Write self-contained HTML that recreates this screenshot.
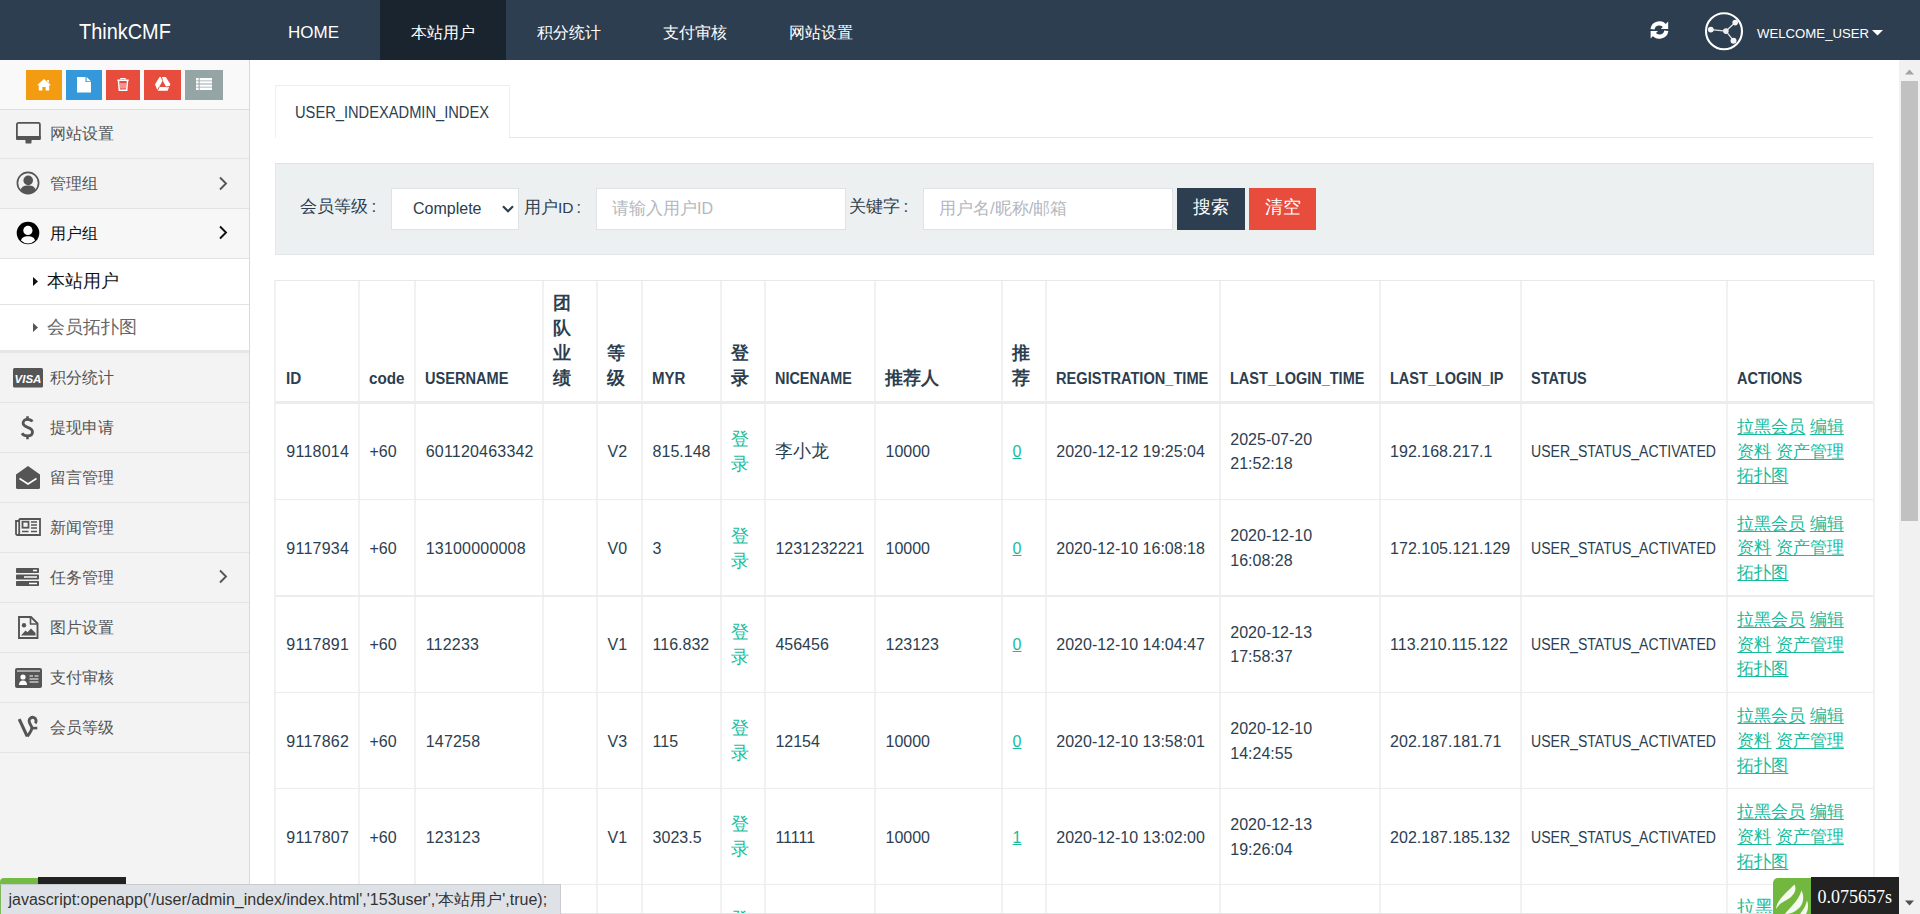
<!DOCTYPE html><html><head><meta charset="utf-8"><style>
*{box-sizing:border-box}
html,body{margin:0;padding:0;width:1920px;height:914px;overflow:hidden;background:#fff;font-family:"Liberation Sans",sans-serif;color:#2c3e50}
svg{display:block}
#nav{position:absolute;left:0;top:0;width:1920px;height:60px;background:#2c3e50}
#nav .t{position:absolute;color:#fff;font-size:16px;line-height:20px;top:22px;white-space:nowrap}
#nav .act{position:absolute;left:380px;top:0;width:126px;height:60px;background:#1a242f}
#side{position:absolute;left:0;top:60px;width:250px;height:854px;background:#f3f3f3;border-right:1px solid #d9d9d9}
.sc{position:absolute;left:0;top:0;width:249px;height:50px;background:#f9f9f9;border-bottom:1px solid #ddd}
.sc .b{position:absolute;top:10px;height:30px}
.sc .b svg{position:absolute}
.mi{position:absolute;left:0;width:249px;border-bottom:1px solid #e3e3e3}
.mi .tx{position:absolute;left:50px;font-size:16.4px;line-height:18px;color:#555;white-space:nowrap}
.mi .ic{position:absolute}
.mi .ar{position:absolute;left:218px}
#main{position:absolute;left:250px;top:60px;width:1650px;height:854px;background:#fff;overflow:hidden}
#sb{position:absolute;left:1899px;top:60px;width:21px;height:854px;background:#f1f1f1}
.abs{position:absolute;white-space:nowrap}
</style></head><body>
<div id="nav">
<div class="t" style="left:79px;top:19.5px;font-size:22px;line-height:24px"><span style="display:inline-block;transform:scaleX(0.905);transform-origin:0 0">ThinkCMF</span></div>
<div class="act"></div>
<div class="t" style="left:288px;top:22.5px;font-size:17px">HOME</div>
<div class="t" style="left:411px;top:23px">本站用户</div>
<div class="t" style="left:537px;top:23px">积分统计</div>
<div class="t" style="left:663px;top:23px">支付审核</div>
<div class="t" style="left:789px;top:23px">网站设置</div>
<div style="position:absolute;left:1644px;top:16px"><svg width="30" height="28" viewBox="0 0 30 28" style=""><path d="M8.5 13.3 A6.9 6.9 0 0 1 21.2 10.6" fill="none" stroke="#fff" stroke-width="4.2"/><path d="M24.2 5.6 L24.2 13 L16.8 13 Z" fill="#fff"/><path d="M22.3 14.7 A6.9 6.9 0 0 1 9.6 17.4" fill="none" stroke="#fff" stroke-width="4.2"/><path d="M6.6 22.4 L6.6 15 L14 15 Z" fill="#fff"/></svg></div>
<div style="position:absolute;left:1704px;top:12px"><svg width="40" height="40" viewBox="0 0 40 40" style=""><circle cx="20" cy="19.3" r="18" fill="none" stroke="#fff" stroke-width="2.1"/><path d="M6.8 17.6 L21.9 19.1 L31.2 10.6 M21.9 19.1 L29.5 28.7" stroke="#dfe3e6" stroke-width="1.3" fill="none"/><circle cx="6.8" cy="17.6" r="2.9" fill="#f4f4f4"/><circle cx="21.9" cy="19.1" r="2.8" fill="#eee"/><circle cx="31.2" cy="10.6" r="2.8" fill="#f4f4f4"/><circle cx="29.5" cy="28.7" r="3" fill="#f4f4f4"/></svg></div>
<div class="t" style="left:1757px;top:25.5px;font-size:13.2px;line-height:16px">WELCOME_USER</div>
<div style="position:absolute;left:1872px;top:30px"><svg width="11" height="6" viewBox="0 0 11 6" style=""><path d="M0 0 L11 0 L5.5 5.5 Z" fill="#fff"/></svg></div>
</div>
<div id="side">
<div class="sc">
<div class="b" style="left:26px;width:36px;background:#f39c12"><div style="position:absolute;left:11px;top:9px"><svg width="14" height="12" viewBox="0 0 14 12" style=""><path d="M7 0 L14 6.3 L12.2 6.3 L12.2 11.5 L8.6 11.5 L8.6 8 L5.4 8 L5.4 11.5 L1.8 11.5 L1.8 6.3 L0 6.3 Z M10 1 L12 1 L12 3.8 L10 2.2Z" fill="#fff"/></svg></div></div>
<div class="b" style="left:66px;width:36px;background:#3498db"><div style="position:absolute;left:11px;top:7px"><svg width="14" height="16" viewBox="0 0 14 16" style=""><path d="M0 0 L8.5 0 L8.5 5 L14 5 L14 15.5 L0 15.5 Z M9.6 0 L14 4.2 L9.6 4.2 Z" fill="#fff"/></svg></div></div>
<div class="b" style="left:106px;width:34px;background:#e74c3c"><div style="position:absolute;left:11px;top:8px"><svg width="12" height="13" viewBox="0 0 12 13" style=""><path d="M4 1.2 L4 0.2 L8 0.2 L8 1.2 M0.3 2.3 L11.7 2.3 M1.5 3 L2.3 12.3 L9.7 12.3 L10.5 3" fill="none" stroke="#fff" stroke-width="1.5"/><path d="M4 5 V10.5 M6 5 V10.5 M8 5 V10.5" stroke="#fde" stroke-width="1"/></svg></div></div>
<div class="b" style="left:144px;width:37px;background:#e74c3c"><div style="position:absolute;left:11px;top:7px"><svg width="16" height="14" viewBox="0 0 16 14" style=""><path d="M4.6 0 L10.8 0 L15.4 7.2 L12.6 13.8 L2.6 13.8 L0 7.2 Z" fill="#fff"/><path d="M7.7 3.6 L11.2 9.9 L4.2 9.9 Z" fill="#e74c3c"/><path d="M7.7 3.6 L6.3 0 M11.2 9.9 L15.4 9.4 M4.2 9.9 L2.4 13.8" stroke="#e74c3c" stroke-width="1"/></svg></div></div>
<div class="b" style="left:185px;width:38px;background:#95a5a6"><div style="position:absolute;left:11px;top:8px"><svg width="16" height="12" viewBox="0 0 16 12" style=""><path d="M0 0H2.6V2.4H0Z M3.6 0H16V2.4H3.6Z M0 3.2H2.6V5.6H0Z M3.6 3.2H16V5.6H3.6Z M0 6.4H2.6V8.8H0Z M3.6 6.4H16V8.8H3.6Z M0 9.6H2.6V12H0Z M3.6 9.6H16V12H3.6Z" fill="#fff"/></svg></div></div>
</div>
<div class="mi" style="top:50px;height:49px;">
<div class="tx" style="top:13.8px;color:#555">网站设置</div>
</div>
<div class="mi" style="top:99px;height:50px;">
<div class="tx" style="top:14.8px;color:#555">管理组</div>
</div>
<div class="mi" style="top:149px;height:50px;background:#f7f7f7;">
<div class="tx" style="top:14.8px;color:#111">用户组</div>
</div>
<div class="mi" style="top:199px;height:46px;background:#fff"><div class="abs" style="left:33px;top:18px"><svg width="6" height="9" viewBox="0 0 6 9" style=""><path d="M0 0 L5 4.5 L0 9Z" fill="#111"/></svg></div><div class="tx" style="left:46.5px;top:11.5px;font-size:17.7px;line-height:20px;color:#111">本站用户</div></div>
<div class="mi" style="top:245px;height:48px;background:#fff;border-bottom:3px solid #e6e6e6"><div class="abs" style="left:33px;top:18px"><svg width="6" height="9" viewBox="0 0 6 9" style=""><path d="M0 0 L5 4.5 L0 9Z" fill="#555"/></svg></div><div class="tx" style="left:46.5px;top:11.5px;font-size:17.7px;line-height:20px;color:#666">会员拓扑图</div></div>
<div class="mi" style="top:293px;height:50px">
<div class="tx" style="top:15.2px">积分统计</div>
</div>
<div class="mi" style="top:343px;height:50px">
<div class="tx" style="top:15.2px">提现申请</div>
</div>
<div class="mi" style="top:393px;height:50px">
<div class="tx" style="top:15.2px">留言管理</div>
</div>
<div class="mi" style="top:443px;height:50px">
<div class="tx" style="top:15.2px">新闻管理</div>
</div>
<div class="mi" style="top:493px;height:50px">
<div class="tx" style="top:15.2px">任务管理</div>
</div>
<div class="mi" style="top:543px;height:50px">
<div class="tx" style="top:15.2px">图片设置</div>
</div>
<div class="mi" style="top:593px;height:50px">
<div class="tx" style="top:15.2px">支付审核</div>
</div>
<div class="mi" style="top:643px;height:50px">
<div class="tx" style="top:15.2px">会员等级</div>
</div>
<div class="abs" style="left:15.5px;top:61.8px"><svg width="25" height="22" viewBox="0 0 25 22" style=""><rect x="0.9" y="0.9" width="23" height="16" rx="1.5" fill="none" stroke="#555" stroke-width="1.8"/><rect x="0" y="14" width="24.8" height="4" rx="1" fill="#555"/><path d="M9.3 18 H15.7 L15.3 21.6 H9.7 Z" fill="#555"/></svg></div>
<div class="abs" style="left:15.6px;top:111.4px"><svg width="24" height="24" viewBox="0 0 24 24" style=""><circle cx="12" cy="12" r="10.6" fill="none" stroke="#555" stroke-width="1.7"/><circle cx="12.2" cy="9.4" r="4.8" fill="#555"/><path d="M4.6 19.2 C5.3 15.8 8 14.6 12.2 14.6 C16.4 14.6 19 15.8 19.6 19.2 A10 10 0 0 1 4.6 19.2Z" fill="#555"/></svg></div>
<div class="abs" style="left:15.85px;top:161.3px"><svg width="24" height="24" viewBox="0 0 24 24" style=""><circle cx="12" cy="12" r="11.3" fill="#000"/><circle cx="11.9" cy="9.4" r="4.6" fill="#fff"/><path d="M5 19.6 C5.6 16.4 8.5 15.3 12 15.3 C15.5 15.3 18.4 16.4 19 19.6 A9.9 9.9 0 0 1 5 19.6Z" fill="#fff"/></svg></div>
<div class="abs" style="left:13px;top:308px"><svg width="30" height="20" viewBox="0 0 30 20" style=""><rect x="0" y="0" width="30" height="19.5" rx="1.5" fill="#555"/><text x="15" y="14.6" text-anchor="middle" font-family="Liberation Sans" font-weight="bold" font-style="italic" font-size="11.5" fill="#fff">VISA</text></svg></div>
<div class="abs" style="left:20px;top:355px"><svg width="15" height="25" viewBox="0 0 15 25" style=""><path d="M12.3 6.6 C11.4 5.1 9.8 4.4 7.5 4.4 C4.6 4.4 3.1 6 3.1 8.1 C3.1 10.5 5.1 11.5 7.6 12.3 C10.5 13.2 12.5 14.3 12.5 17 C12.5 19.4 10.5 20.9 7.5 20.9 C5 20.9 3 20 2 18.3" fill="none" stroke="#555" stroke-width="2.8"/><path d="M7.5 1.2 V4.6 M7.5 20.7 V24.2" stroke="#555" stroke-width="2.6"/></svg></div>
<div class="abs" style="left:16px;top:405.5px"><svg width="24" height="23" viewBox="0 0 24 23" style=""><path d="M0 8.5 L12 0 L24 8.5 L24 21.5 Q24 23 22.5 23 L1.5 23 Q0 23 0 21.5 Z" fill="#555"/><path d="M3.5 12.5 L12 18 L20.5 12.5" fill="none" stroke="#fff" stroke-width="1.5"/></svg></div>
<div class="abs" style="left:15px;top:457.5px"><svg width="26" height="18" viewBox="0 0 26 18" style=""><path d="M4.2 1 H25 V17 H2.5 Q1 17 1 15.5 V3 H4.2" fill="none" stroke="#555" stroke-width="1.8"/><path d="M4.2 1 V17" stroke="#555" stroke-width="1.8"/><rect x="7.5" y="3.7" width="6" height="6" fill="none" stroke="#555" stroke-width="1.8"/><path d="M16 4 H22 M16 7 H22 M16 10 H22 M7 13.5 H13.5 M16 13.5 H22" stroke="#555" stroke-width="1.7"/></svg></div>
<div class="abs" style="left:16px;top:507.5px"><svg width="24" height="18" viewBox="0 0 24 18" style=""><rect x="0" y="0" width="23" height="5" rx="0.8" fill="#555"/><rect x="0" y="6.5" width="23" height="5" rx="0.8" fill="#555"/><rect x="0" y="13" width="23" height="5" rx="0.8" fill="#555"/><path d="M17 2.5H21 M8 9H21 M13 15.5H21" stroke="#fff" stroke-width="1.4"/></svg></div>
<div class="abs" style="left:17.5px;top:556px"><svg width="21" height="23" viewBox="0 0 21 23" style=""><path d="M1 1 H13 L19.5 7.5 V22 H1 Z" fill="none" stroke="#555" stroke-width="1.9"/><path d="M12.5 1 V8 H19.5" fill="none" stroke="#555" stroke-width="1.6"/><circle cx="6" cy="9.3" r="2.2" fill="#555"/><path d="M3 19.5 L7.5 14.5 L9.5 16.3 L13 12.5 L17.5 17 V19.5 Z" fill="#555"/></svg></div>
<div class="abs" style="left:14.5px;top:607.5px"><svg width="27" height="20" viewBox="0 0 27 20" style=""><rect x="0" y="0" width="27" height="20" rx="2" fill="#555"/><path d="M2 3 H25" stroke="#fff" stroke-width="1"/><circle cx="8" cy="9" r="2.6" fill="#fff"/><path d="M4 17 Q4 12.5 8 12.5 Q12 12.5 12 17Z" fill="#fff"/><path d="M14.5 8 H18 M19.5 8 H23.5 M14.5 11 H23.5 M14.5 14 H23.5" stroke="#fff" stroke-width="1.2"/></svg></div>
<div class="abs" style="left:14px;top:652px"><svg width="28" height="28" viewBox="0 0 28 28" style=""><path d="M5.2 7.2 L13.2 24.3" fill="none" stroke="#555" stroke-width="3.1"/><path d="M13.2 24.3 C15.5 21.5 18.2 18.5 17.8 15.4 C17.5 13.5 15.1 11.6 15.1 8.8 A3.5 3.5 0 1 1 21.2 11.2" fill="none" stroke="#555" stroke-width="2.9"/><path d="M17.2 16.1 H23.3" stroke="#555" stroke-width="2.6"/></svg></div>
<div class="abs" style="left:218px;top:116px"><svg width="10" height="15" viewBox="0 0 10 15" style=""><path d="M2 1.5 L8 7.5 L2 13.5" fill="none" stroke="#555" stroke-width="1.9"/></svg></div>
<div class="abs" style="left:218px;top:165px"><svg width="10" height="15" viewBox="0 0 10 15" style=""><path d="M2 1.5 L8 7.5 L2 13.5" fill="none" stroke="#111" stroke-width="1.9"/></svg></div>
<div class="abs" style="left:218px;top:509px"><svg width="10" height="15" viewBox="0 0 10 15" style=""><path d="M2 1.5 L8 7.5 L2 13.5" fill="none" stroke="#555" stroke-width="1.9"/></svg></div>
</div>
<div id="main"></div>
<div class="abs" style="left:275px;top:85px;width:235px;height:53px;border:1px solid #eceeef;border-bottom:none;background:#fff"></div>
<div class="abs" style="left:509px;top:137px;width:1364px;height:1px;background:#e6e8e9"></div>
<div class="abs" style="left:295px;top:104px;font-size:16px;line-height:18px;color:#2c3e50"><span style="display:inline-block;transform:scaleX(0.917);transform-origin:0 0;">USER_INDEXADMIN_INDEX</span></div>
<div class="abs" style="left:275px;top:163px;width:1599px;height:92px;background:#ecf0f1;border:1px solid #e4e7e9;border-top-color:#dfe2e4"></div>
<div class="abs" style="left:300px;top:197px;font-size:17px;line-height:20px;color:#2c3e50">会员等级<span style="padding-left:3.5px">:</span></div>
<div class="abs" style="left:391px;top:188px;width:128px;height:42px;background:#fff;border:1px solid #dfe3e5"></div>
<div class="abs" style="left:413px;top:200px;font-size:16px;line-height:18px;color:#2c3e50">Complete</div>
<div class="abs" style="left:502px;top:205px;"><svg width="12" height="8" viewBox="0 0 12 8" style=""><path d="M1 1.2 L6 6.2 L11 1.2" fill="none" stroke="#2c3e50" stroke-width="2.2"/></svg></div>
<div class="abs" style="left:524px;top:197.5px;font-size:17px;line-height:20px;color:#2c3e50">用户<span style="font-size:15.5px">ID</span><span style="padding-left:3px;font-size:16px">:</span></div>
<div class="abs" style="left:596px;top:188px;width:250px;height:42px;background:#fff;border:1px solid #dfe3e5"></div>
<div class="abs" style="left:612px;top:199px;font-size:17px;line-height:20px;color:#b3b8bd">请输入用户<span style="font-size:16px">ID</span></div>
<div class="abs" style="left:849px;top:197px;font-size:17px;line-height:20px;color:#2c3e50">关键字<span style="padding-left:3.5px">:</span></div>
<div class="abs" style="left:923px;top:188px;width:250px;height:42px;background:#fff;border:1px solid #dfe3e5"></div>
<div class="abs" style="left:939px;top:199px;font-size:17px;line-height:20px;color:#b3b8bd">用户名/昵称/邮箱</div>
<div class="abs" style="left:1177px;top:188px;width:68px;height:42px;background:#2c3e50"></div>
<div class="abs" style="left:1193px;top:197px;font-size:18px;line-height:20px;color:#fff">搜索</div>
<div class="abs" style="left:1249px;top:188px;width:67px;height:42px;background:#e74c3c"></div>
<div class="abs" style="left:1265px;top:197px;font-size:18px;line-height:20px;color:#fff">清空</div>
<div class="abs" style="left:274.4px;top:280px;width:2px;height:634px;background:#f1f1f1"></div>
<div class="abs" style="left:357.9px;top:280px;width:2px;height:634px;background:#f1f1f1"></div>
<div class="abs" style="left:414.1px;top:280px;width:2px;height:634px;background:#f1f1f1"></div>
<div class="abs" style="left:542.1px;top:280px;width:2px;height:634px;background:#f1f1f1"></div>
<div class="abs" style="left:596.0px;top:280px;width:2px;height:634px;background:#f1f1f1"></div>
<div class="abs" style="left:641.0px;top:280px;width:2px;height:634px;background:#f1f1f1"></div>
<div class="abs" style="left:720.1px;top:280px;width:2px;height:634px;background:#f1f1f1"></div>
<div class="abs" style="left:763.8px;top:280px;width:2px;height:634px;background:#f1f1f1"></div>
<div class="abs" style="left:873.9px;top:280px;width:2px;height:634px;background:#f1f1f1"></div>
<div class="abs" style="left:1001.0px;top:280px;width:2px;height:634px;background:#f1f1f1"></div>
<div class="abs" style="left:1044.7px;top:280px;width:2px;height:634px;background:#f1f1f1"></div>
<div class="abs" style="left:1218.7px;top:280px;width:2px;height:634px;background:#f1f1f1"></div>
<div class="abs" style="left:1378.5px;top:280px;width:2px;height:634px;background:#f1f1f1"></div>
<div class="abs" style="left:1519.7px;top:280px;width:2px;height:634px;background:#f1f1f1"></div>
<div class="abs" style="left:1725.8px;top:280px;width:2px;height:634px;background:#f1f1f1"></div>
<div class="abs" style="left:1872.7px;top:280px;width:2px;height:634px;background:#f1f1f1"></div>
<div class="abs" style="left:275px;top:280px;width:1598.3px;height:1px;background:#e8e8e8"></div>
<div class="abs" style="left:275px;top:401px;width:1598.3px;height:2.6px;background:#ececec"></div>
<div class="abs" style="left:275px;top:499.0px;width:1598.3px;height:1.3px;background:#ececec"></div>
<div class="abs" style="left:275px;top:595.3px;width:1598.3px;height:1.3px;background:#ececec"></div>
<div class="abs" style="left:275px;top:691.6px;width:1598.3px;height:1.3px;background:#ececec"></div>
<div class="abs" style="left:275px;top:787.9px;width:1598.3px;height:1.3px;background:#ececec"></div>
<div class="abs" style="left:275px;top:884.2px;width:1598.3px;height:1.3px;background:#ececec"></div>
<div class="abs" style="left:285.5px;top:366px;font-size:16px;line-height:25px;font-weight:bold;color:#2c3e50"><span style="display:inline-block;transform:scaleX(0.95);transform-origin:0 0;">ID</span></div>
<div class="abs" style="left:369.0px;top:366px;font-size:16px;line-height:25px;font-weight:bold;color:#2c3e50"><span style="display:inline-block;transform:scaleX(0.95);transform-origin:0 0;">code</span></div>
<div class="abs" style="left:425.2px;top:366px;font-size:16px;line-height:25px;font-weight:bold;color:#2c3e50"><span style="display:inline-block;transform:scaleX(0.911);transform-origin:0 0;">USERNAME</span></div>
<div class="abs" style="left:553.2px;top:291px;font-size:17.5px;line-height:25px;font-weight:bold;color:#2c3e50">团<br>队<br>业<br>绩</div>
<div class="abs" style="left:607.1px;top:341px;font-size:17.5px;line-height:25px;font-weight:bold;color:#2c3e50">等<br>级</div>
<div class="abs" style="left:652.1px;top:366px;font-size:16px;line-height:25px;font-weight:bold;color:#2c3e50"><span style="display:inline-block;transform:scaleX(0.94);transform-origin:0 0;">MYR</span></div>
<div class="abs" style="left:731.2px;top:341px;font-size:17.5px;line-height:25px;font-weight:bold;color:#2c3e50">登<br>录</div>
<div class="abs" style="left:774.9px;top:366px;font-size:16px;line-height:25px;font-weight:bold;color:#2c3e50"><span style="display:inline-block;transform:scaleX(0.9);transform-origin:0 0;">NICENAME</span></div>
<div class="abs" style="left:885.0px;top:366px;font-size:17.5px;line-height:25px;font-weight:bold;color:#2c3e50">推荐人</div>
<div class="abs" style="left:1012.1px;top:341px;font-size:17.5px;line-height:25px;font-weight:bold;color:#2c3e50">推<br>荐</div>
<div class="abs" style="left:1055.8px;top:366px;font-size:16px;line-height:25px;font-weight:bold;color:#2c3e50"><span style="display:inline-block;transform:scaleX(0.913);transform-origin:0 0;">REGISTRATION_TIME</span></div>
<div class="abs" style="left:1229.8px;top:366px;font-size:16px;line-height:25px;font-weight:bold;color:#2c3e50"><span style="display:inline-block;transform:scaleX(0.905);transform-origin:0 0;">LAST_LOGIN_TIME</span></div>
<div class="abs" style="left:1389.6px;top:366px;font-size:16px;line-height:25px;font-weight:bold;color:#2c3e50"><span style="display:inline-block;transform:scaleX(0.905);transform-origin:0 0;">LAST_LOGIN_IP</span></div>
<div class="abs" style="left:1530.8px;top:366px;font-size:16px;line-height:25px;font-weight:bold;color:#2c3e50"><span style="display:inline-block;transform:scaleX(0.905);transform-origin:0 0;">STATUS</span></div>
<div class="abs" style="left:1736.9px;top:366px;font-size:16px;line-height:25px;font-weight:bold;color:#2c3e50"><span style="display:inline-block;transform:scaleX(0.905);transform-origin:0 0;">ACTIONS</span></div>
<div class="abs" style="left:286.3px;top:439.45px;font-size:16px;line-height:25px;color:#2c3e50;letter-spacing:0.25px">9118014</div>
<div class="abs" style="left:369.5px;top:439.45px;font-size:16px;line-height:25px;color:#2c3e50">+60</div>
<div class="abs" style="left:425.7px;top:439.45px;font-size:16px;line-height:25px;color:#2c3e50;letter-spacing:0.2px">601120463342</div>
<div class="abs" style="left:607.6px;top:439.45px;font-size:16px;line-height:25px;color:#2c3e50">V2</div>
<div class="abs" style="left:652.6px;top:439.45px;font-size:16px;line-height:25px;color:#2c3e50">815.148</div>
<div class="abs" style="left:731.0px;top:426.95px;font-size:17.5px;line-height:25px;color:#18bc9c">登<br>录</div>
<div class="abs" style="left:774.6999999999999px;top:439.45px;font-size:17.5px;line-height:25px;color:#2c3e50">李小龙</div>
<div class="abs" style="left:885.5px;top:439.45px;font-size:16px;line-height:25px;color:#2c3e50">10000</div>
<div class="abs" style="left:1012.6px;top:439.45px;font-size:16px;line-height:25px;color:#2c3e50;color:#18bc9c;text-decoration:underline">0</div>
<div class="abs" style="left:1056.3px;top:439.45px;font-size:16px;line-height:25px;color:#2c3e50">2020-12-12 19:25:04</div>
<div class="abs" style="left:1230.3px;top:427.65px;font-size:16px;line-height:25px;color:#2c3e50;line-height:24.7px">2025-07-20<br>21:52:18</div>
<div class="abs" style="left:1390.1px;top:439.45px;font-size:16px;line-height:25px;color:#2c3e50">192.168.217.1</div>
<div class="abs" style="left:1531.3px;top:439.45px;font-size:16px;line-height:25px;color:#2c3e50"><span style="display:inline-block;transform:scaleX(0.879);transform-origin:0 0;">USER_STATUS_ACTIVATED</span></div>
<div class="abs" style="left:1737.4px;top:413.95px;font-size:17.25px;line-height:24.75px;color:#18bc9c;text-underline-offset:2px"><u>拉黑会员</u><span style="display:inline-block;width:4.5px"></span><u>编辑<br>资料</u><span style="display:inline-block;width:4.5px"></span><u>资产管理</u><br><u>拓扑图</u></div>
<div class="abs" style="left:286.3px;top:536.05px;font-size:16px;line-height:25px;color:#2c3e50;letter-spacing:0.25px">9117934</div>
<div class="abs" style="left:369.5px;top:536.05px;font-size:16px;line-height:25px;color:#2c3e50">+60</div>
<div class="abs" style="left:425.7px;top:536.05px;font-size:16px;line-height:25px;color:#2c3e50;letter-spacing:0.2px">13100000008</div>
<div class="abs" style="left:607.6px;top:536.05px;font-size:16px;line-height:25px;color:#2c3e50">V0</div>
<div class="abs" style="left:652.6px;top:536.05px;font-size:16px;line-height:25px;color:#2c3e50">3</div>
<div class="abs" style="left:731.0px;top:523.55px;font-size:17.5px;line-height:25px;color:#18bc9c">登<br>录</div>
<div class="abs" style="left:775.4px;top:536.05px;font-size:16px;line-height:25px;color:#2c3e50">1231232221</div>
<div class="abs" style="left:885.5px;top:536.05px;font-size:16px;line-height:25px;color:#2c3e50">10000</div>
<div class="abs" style="left:1012.6px;top:536.05px;font-size:16px;line-height:25px;color:#2c3e50;color:#18bc9c;text-decoration:underline">0</div>
<div class="abs" style="left:1056.3px;top:536.05px;font-size:16px;line-height:25px;color:#2c3e50">2020-12-10 16:08:18</div>
<div class="abs" style="left:1230.3px;top:524.25px;font-size:16px;line-height:25px;color:#2c3e50;line-height:24.7px">2020-12-10<br>16:08:28</div>
<div class="abs" style="left:1390.1px;top:536.05px;font-size:16px;line-height:25px;color:#2c3e50">172.105.121.129</div>
<div class="abs" style="left:1531.3px;top:536.05px;font-size:16px;line-height:25px;color:#2c3e50"><span style="display:inline-block;transform:scaleX(0.879);transform-origin:0 0;">USER_STATUS_ACTIVATED</span></div>
<div class="abs" style="left:1737.4px;top:510.55px;font-size:17.25px;line-height:24.75px;color:#18bc9c;text-underline-offset:2px"><u>拉黑会员</u><span style="display:inline-block;width:4.5px"></span><u>编辑<br>资料</u><span style="display:inline-block;width:4.5px"></span><u>资产管理</u><br><u>拓扑图</u></div>
<div class="abs" style="left:286.3px;top:632.3499999999999px;font-size:16px;line-height:25px;color:#2c3e50;letter-spacing:0.25px">9117891</div>
<div class="abs" style="left:369.5px;top:632.3499999999999px;font-size:16px;line-height:25px;color:#2c3e50">+60</div>
<div class="abs" style="left:425.7px;top:632.3499999999999px;font-size:16px;line-height:25px;color:#2c3e50;letter-spacing:0.2px">112233</div>
<div class="abs" style="left:607.6px;top:632.3499999999999px;font-size:16px;line-height:25px;color:#2c3e50">V1</div>
<div class="abs" style="left:652.6px;top:632.3499999999999px;font-size:16px;line-height:25px;color:#2c3e50">116.832</div>
<div class="abs" style="left:731.0px;top:619.8499999999999px;font-size:17.5px;line-height:25px;color:#18bc9c">登<br>录</div>
<div class="abs" style="left:775.4px;top:632.3499999999999px;font-size:16px;line-height:25px;color:#2c3e50">456456</div>
<div class="abs" style="left:885.5px;top:632.3499999999999px;font-size:16px;line-height:25px;color:#2c3e50">123123</div>
<div class="abs" style="left:1012.6px;top:632.3499999999999px;font-size:16px;line-height:25px;color:#2c3e50;color:#18bc9c;text-decoration:underline">0</div>
<div class="abs" style="left:1056.3px;top:632.3499999999999px;font-size:16px;line-height:25px;color:#2c3e50">2020-12-10 14:04:47</div>
<div class="abs" style="left:1230.3px;top:620.55px;font-size:16px;line-height:25px;color:#2c3e50;line-height:24.7px">2020-12-13<br>17:58:37</div>
<div class="abs" style="left:1390.1px;top:632.3499999999999px;font-size:16px;line-height:25px;color:#2c3e50">113.210.115.122</div>
<div class="abs" style="left:1531.3px;top:632.3499999999999px;font-size:16px;line-height:25px;color:#2c3e50"><span style="display:inline-block;transform:scaleX(0.879);transform-origin:0 0;">USER_STATUS_ACTIVATED</span></div>
<div class="abs" style="left:1737.4px;top:606.8499999999999px;font-size:17.25px;line-height:24.75px;color:#18bc9c;text-underline-offset:2px"><u>拉黑会员</u><span style="display:inline-block;width:4.5px"></span><u>编辑<br>资料</u><span style="display:inline-block;width:4.5px"></span><u>资产管理</u><br><u>拓扑图</u></div>
<div class="abs" style="left:286.3px;top:728.65px;font-size:16px;line-height:25px;color:#2c3e50;letter-spacing:0.25px">9117862</div>
<div class="abs" style="left:369.5px;top:728.65px;font-size:16px;line-height:25px;color:#2c3e50">+60</div>
<div class="abs" style="left:425.7px;top:728.65px;font-size:16px;line-height:25px;color:#2c3e50;letter-spacing:0.2px">147258</div>
<div class="abs" style="left:607.6px;top:728.65px;font-size:16px;line-height:25px;color:#2c3e50">V3</div>
<div class="abs" style="left:652.6px;top:728.65px;font-size:16px;line-height:25px;color:#2c3e50">115</div>
<div class="abs" style="left:731.0px;top:716.15px;font-size:17.5px;line-height:25px;color:#18bc9c">登<br>录</div>
<div class="abs" style="left:775.4px;top:728.65px;font-size:16px;line-height:25px;color:#2c3e50">12154</div>
<div class="abs" style="left:885.5px;top:728.65px;font-size:16px;line-height:25px;color:#2c3e50">10000</div>
<div class="abs" style="left:1012.6px;top:728.65px;font-size:16px;line-height:25px;color:#2c3e50;color:#18bc9c;text-decoration:underline">0</div>
<div class="abs" style="left:1056.3px;top:728.65px;font-size:16px;line-height:25px;color:#2c3e50">2020-12-10 13:58:01</div>
<div class="abs" style="left:1230.3px;top:716.85px;font-size:16px;line-height:25px;color:#2c3e50;line-height:24.7px">2020-12-10<br>14:24:55</div>
<div class="abs" style="left:1390.1px;top:728.65px;font-size:16px;line-height:25px;color:#2c3e50">202.187.181.71</div>
<div class="abs" style="left:1531.3px;top:728.65px;font-size:16px;line-height:25px;color:#2c3e50"><span style="display:inline-block;transform:scaleX(0.879);transform-origin:0 0;">USER_STATUS_ACTIVATED</span></div>
<div class="abs" style="left:1737.4px;top:703.15px;font-size:17.25px;line-height:24.75px;color:#18bc9c;text-underline-offset:2px"><u>拉黑会员</u><span style="display:inline-block;width:4.5px"></span><u>编辑<br>资料</u><span style="display:inline-block;width:4.5px"></span><u>资产管理</u><br><u>拓扑图</u></div>
<div class="abs" style="left:286.3px;top:824.9499999999999px;font-size:16px;line-height:25px;color:#2c3e50;letter-spacing:0.25px">9117807</div>
<div class="abs" style="left:369.5px;top:824.9499999999999px;font-size:16px;line-height:25px;color:#2c3e50">+60</div>
<div class="abs" style="left:425.7px;top:824.9499999999999px;font-size:16px;line-height:25px;color:#2c3e50;letter-spacing:0.2px">123123</div>
<div class="abs" style="left:607.6px;top:824.9499999999999px;font-size:16px;line-height:25px;color:#2c3e50">V1</div>
<div class="abs" style="left:652.6px;top:824.9499999999999px;font-size:16px;line-height:25px;color:#2c3e50">3023.5</div>
<div class="abs" style="left:731.0px;top:812.4499999999999px;font-size:17.5px;line-height:25px;color:#18bc9c">登<br>录</div>
<div class="abs" style="left:775.4px;top:824.9499999999999px;font-size:16px;line-height:25px;color:#2c3e50">11111</div>
<div class="abs" style="left:885.5px;top:824.9499999999999px;font-size:16px;line-height:25px;color:#2c3e50">10000</div>
<div class="abs" style="left:1012.6px;top:824.9499999999999px;font-size:16px;line-height:25px;color:#2c3e50;color:#18bc9c;text-decoration:underline">1</div>
<div class="abs" style="left:1056.3px;top:824.9499999999999px;font-size:16px;line-height:25px;color:#2c3e50">2020-12-10 13:02:00</div>
<div class="abs" style="left:1230.3px;top:813.15px;font-size:16px;line-height:25px;color:#2c3e50;line-height:24.7px">2020-12-13<br>19:26:04</div>
<div class="abs" style="left:1390.1px;top:824.9499999999999px;font-size:16px;line-height:25px;color:#2c3e50">202.187.185.132</div>
<div class="abs" style="left:1531.3px;top:824.9499999999999px;font-size:16px;line-height:25px;color:#2c3e50"><span style="display:inline-block;transform:scaleX(0.879);transform-origin:0 0;">USER_STATUS_ACTIVATED</span></div>
<div class="abs" style="left:1737.4px;top:799.4499999999999px;font-size:17.25px;line-height:24.75px;color:#18bc9c;text-underline-offset:2px"><u>拉黑会员</u><span style="display:inline-block;width:4.5px"></span><u>编辑<br>资料</u><span style="display:inline-block;width:4.5px"></span><u>资产管理</u><br><u>拓扑图</u></div>
<div class="abs" style="left:731.0px;top:907px;font-size:17.5px;line-height:25px;color:#18bc9c">登</div>
<div class="abs" style="left:1737.4px;top:895px;font-size:17.5px;line-height:25px;color:#18bc9c"><u>拉黑会员</u></div>
<div class="abs" style="left:250px;top:913px;width:1650px;height:1px;background:#e4e4e4"></div>
<div id="sb"></div>
<div class="abs" style="left:1901px;top:81px;width:17px;height:440px;background:#c1c1c1"></div>
<div class="abs" style="left:1905px;top:68.8px;"><svg width="9" height="6" viewBox="0 0 9 6" style=""><path d="M0 5.5 L4.5 0.5 L9 5.5Z" fill="#a3a3a3"/></svg></div>
<div class="abs" style="left:1905px;top:899.8px;"><svg width="9" height="6" viewBox="0 0 9 6" style=""><path d="M0 0.5 L4.5 5.5 L9 0.5Z" fill="#505050"/></svg></div>
<div class="abs" style="left:0;top:878px;width:38px;height:7px;background:#74bb44;border-radius:4px 0 0 0"></div>
<div class="abs" style="left:38px;top:877px;width:88px;height:8px;background:#222"></div>
<div class="abs" style="left:0;top:884px;width:561px;height:30px;background:#dee1e6;border-top:1px solid #c8cbd0;border-right:1px solid #c8cbd0;border-left:1px solid #7fb85a"></div>
<div class="abs" style="left:8.5px;top:890px;font-size:16px;line-height:20px;color:#333">javascript:openapp('/user/admin_index/index.html','153user','本站用户',true);</div>
<div class="abs" style="left:1773px;top:878px;width:38px;height:36px;background:#72b83e;border-radius:5px 0 0 0"></div>
<div class="abs" style="left:1773px;top:878px;"><svg width="38" height="36" viewBox="0 0 38 36" style=""><path d="M3 31 C4 22 12 16 21.5 6.5 C23.5 10 22.5 15 18 19 C13 23 7 24 3 31 Z" fill="#fff" opacity="0.92"/><path d="M12 36 C16 30 25 24 28.5 12.5 C31 17 31.5 26 25 31 C22 34 17 36 12 36 Z" fill="#fff" opacity="0.92"/><path d="M27 36 C30 32 33 28 34 22.5 C35.5 26 35.5 32 33 36 Z" fill="#fff" opacity="0.92"/></svg></div>
<div class="abs" style="left:1810.5px;top:877px;width:88px;height:37px;background:#222"></div>
<div class="abs" style="left:1817.5px;top:885.5px;font-family:Liberation Serif,serif;font-size:18px;line-height:22px;color:#fff">0.075657s</div>
</body></html>
